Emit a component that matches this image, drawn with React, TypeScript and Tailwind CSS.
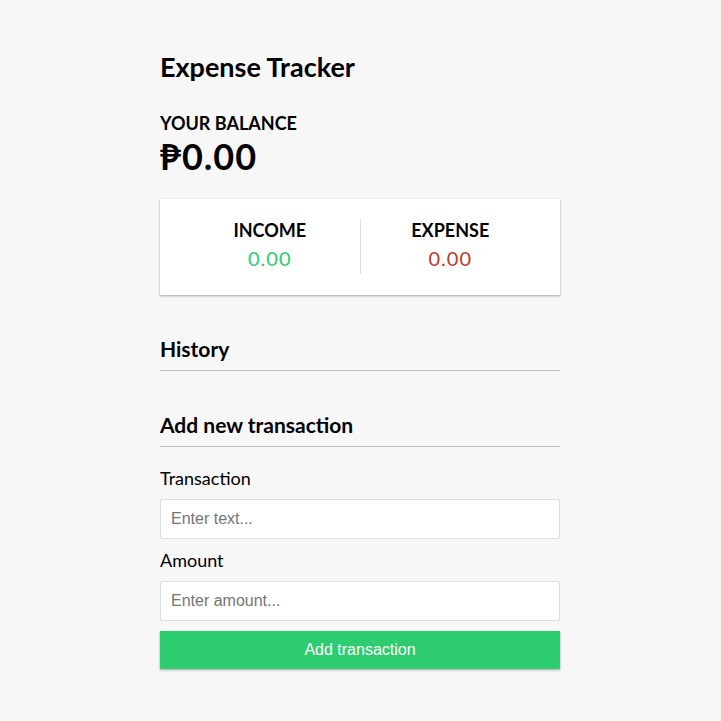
import React from 'react';

export default function App() {
  const shadow = 'shadow-[0_1px_3px_rgba(0,0,0,0.12),0_1px_2px_rgba(0,0,0,0.24)]';
  const field =
    "block mt-[10px] w-full h-[40px] px-[10px] bg-white border border-[#dedede] rounded-[2px] text-[16px] font-['Liberation_Sans',Arial,sans-serif] placeholder:text-[#757575] outline-none";

  return (
    <div className="min-h-screen bg-[#f7f7f7] flex justify-center pr-px font-['Lato',sans-serif] text-[18px] text-black">
      <div className="w-[400px] pt-[51px] pb-[30px]">
        {/* HEADER */}
        <h2 className="text-[27px] leading-[32px] font-bold">Expense Tracker</h2>

        {/* BALANCE */}
        <h4 className="mt-[29px] text-[18px] leading-[22px] font-bold uppercase">Your Balance</h4>
        <h1 className="mt-[1px] text-[36px] leading-[43px] font-bold tracking-[1px]">₱0.00</h1>

        {/* INCOME / EXPENSE */}
        <div className={`mt-[21px] bg-white px-[20px] pt-[20px] pb-[21px] flex ${shadow}`}>
          <div className="flex-1 text-center border-r border-[#dedede]">
            <h4 className="text-[18px] leading-[22px] font-bold uppercase">Income</h4>
            <p className="mt-[5px] mb-[4px] text-[20px] leading-[24px] tracking-[1px] text-[#2ecc71]">0.00</p>
          </div>
          <div className="flex-1 text-center">
            <h4 className="text-[18px] leading-[22px] font-bold uppercase">Expense</h4>
            <p className="mt-[5px] mb-[4px] text-[20px] leading-[24px] tracking-[1px] text-[#c0392b]">0.00</p>
          </div>
        </div>

        {/* HISTORY */}
        <h3 className="mt-[42px] pb-[10px] border-b border-[#bbb] text-[21px] leading-[23px] font-bold">History</h3>

        {/* FORM */}
        <h3 className="mt-[42px] pb-[10px] border-b border-[#bbb] text-[21px] leading-[23px] font-bold">Add new transaction</h3>
        <form onSubmit={e => e.preventDefault()}>
          <label className="block mt-[20px] leading-[22px]">Transaction</label>
          <input type="text" placeholder="Enter text..." className={field} />
          <label className="block mt-[10px] leading-[22px]">Amount</label>
          <input type="number" placeholder="Enter amount..." className={field} />
          <button
            type="submit"
            className={`block mt-[10px] w-full h-[38px] bg-[#2ecc71] text-white text-[16px] font-['Liberation_Sans',Arial,sans-serif] ${shadow}`}
          >
            Add transaction
          </button>
        </form>
      </div>
    </div>
  );
}
